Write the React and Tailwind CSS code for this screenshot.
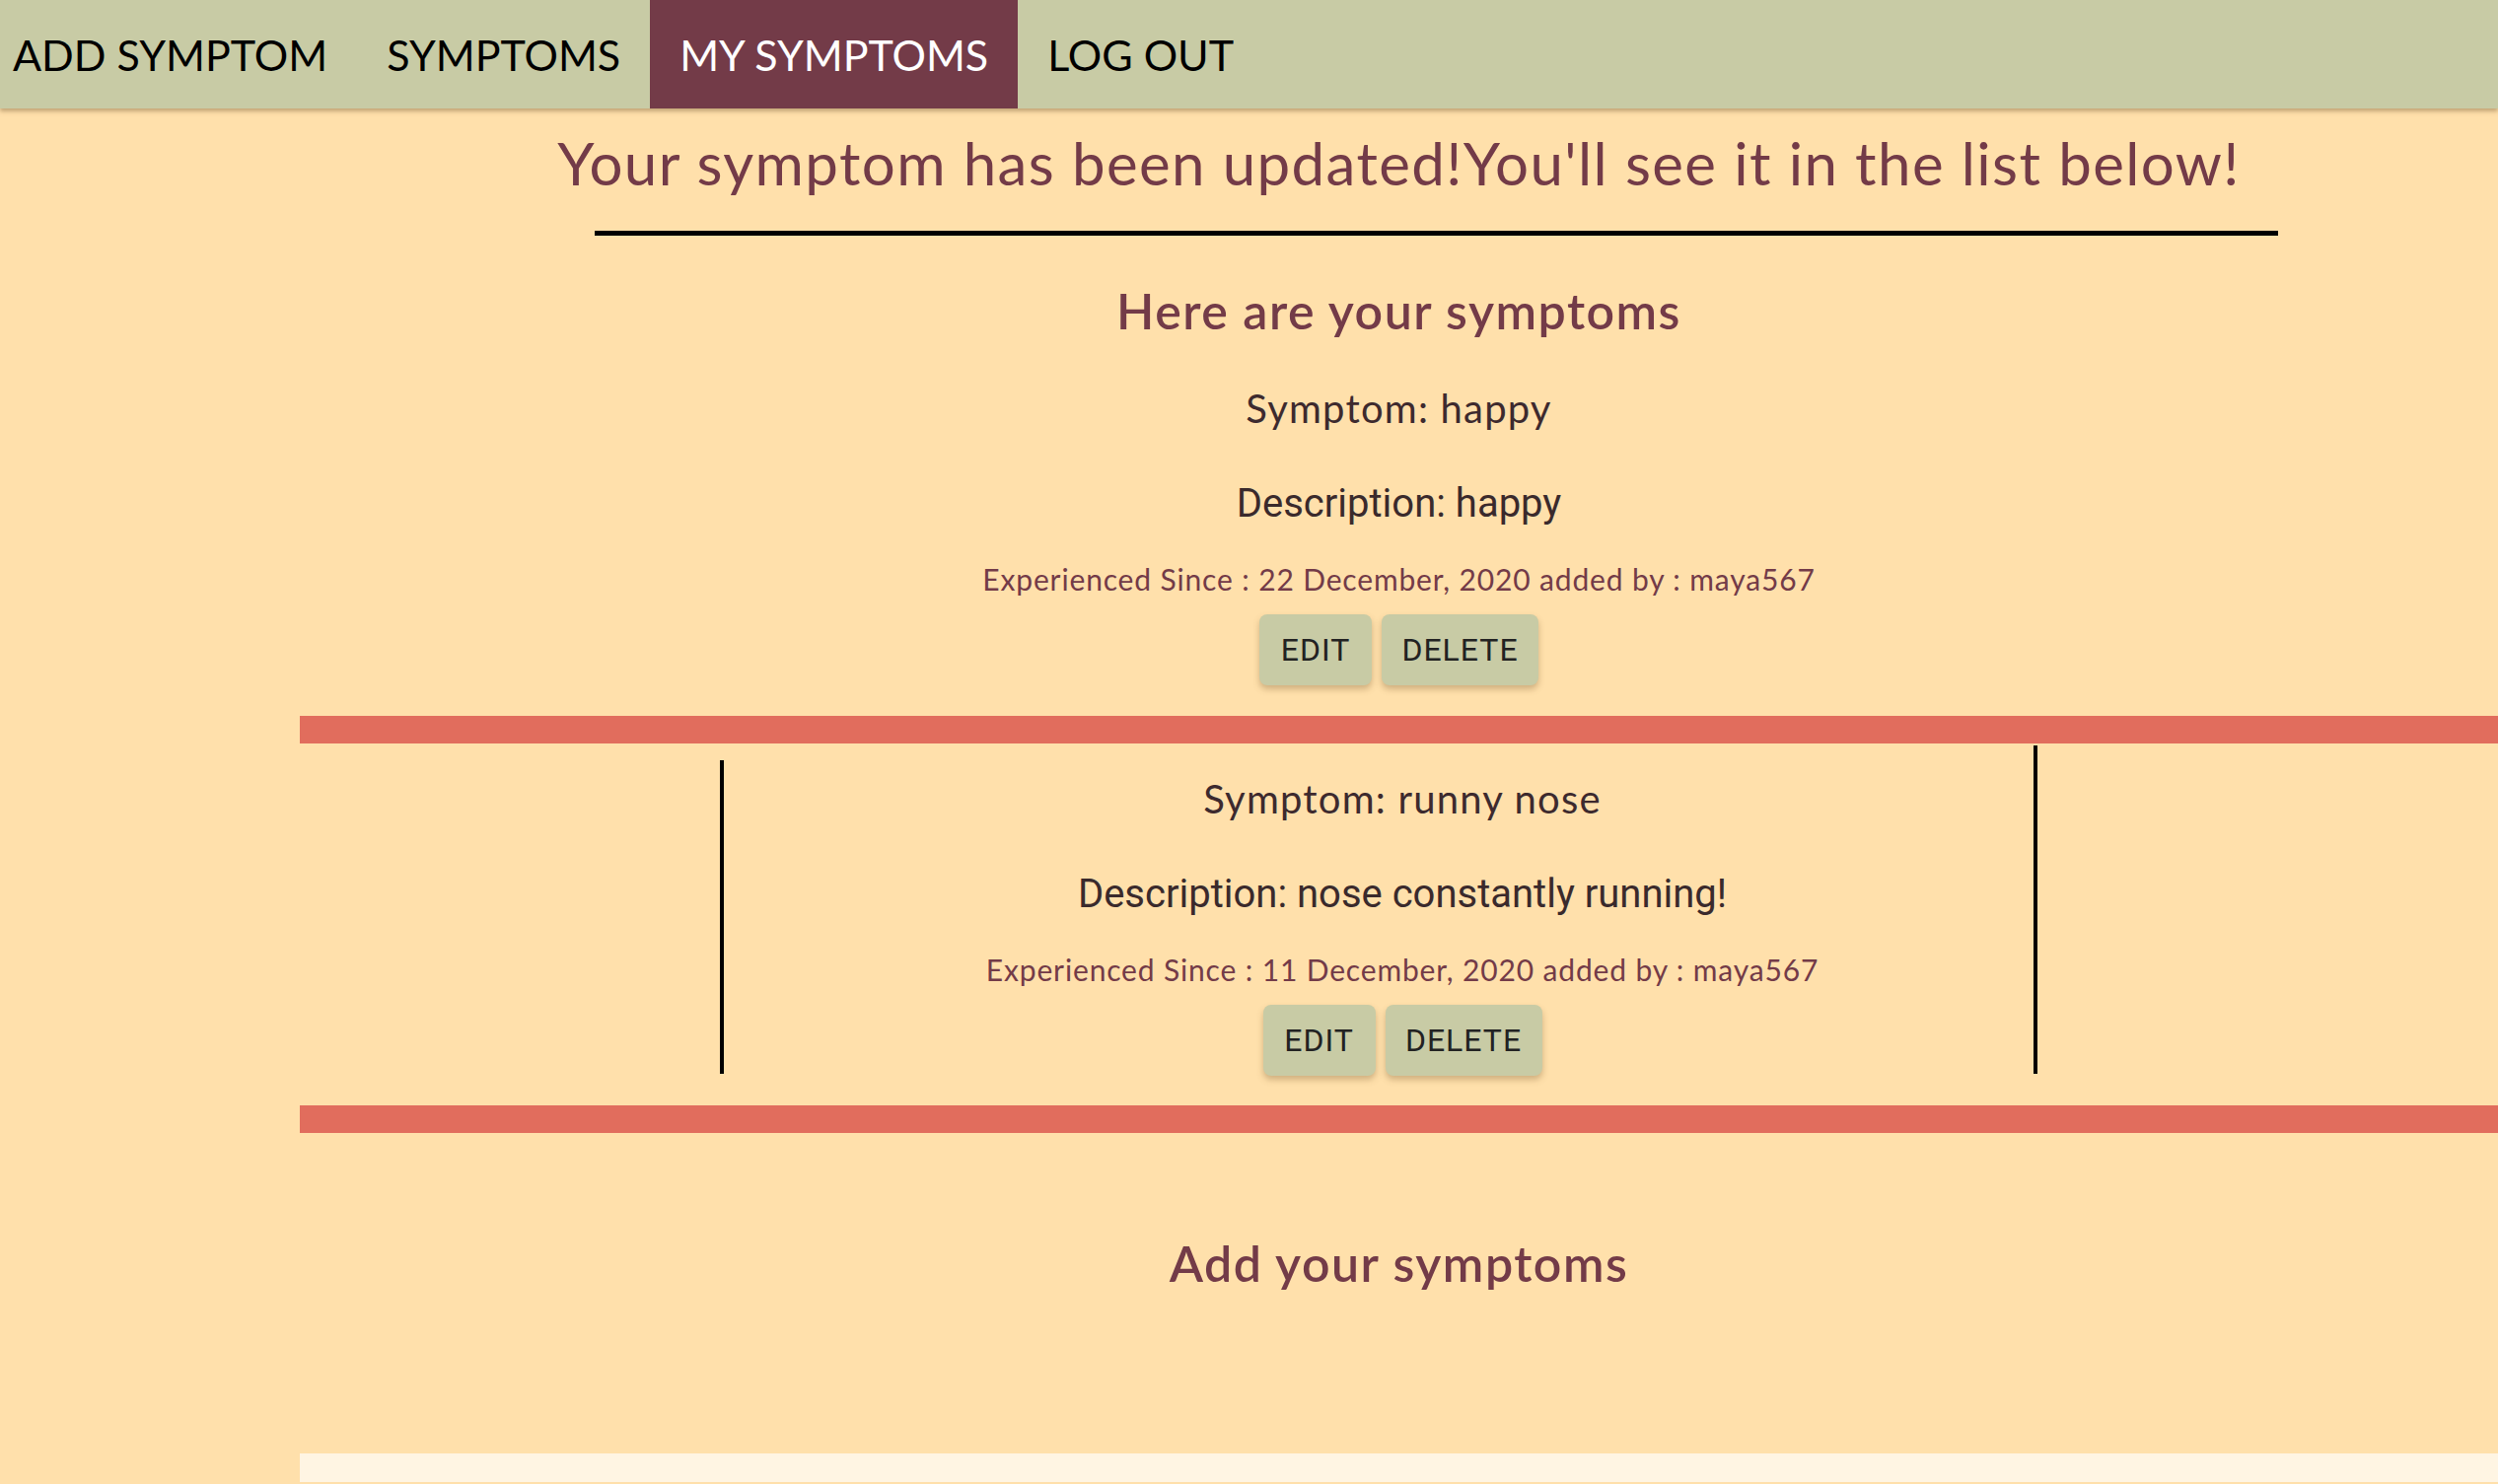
import React from "react";

const symptoms = [
  {
    name: "happy",
    description: "happy",
    since: "22 December, 2020",
    user: "maya567",
  },
  {
    name: "runny nose",
    description: "nose constantly running!",
    since: "11 December, 2020",
    user: "maya567",
  },
];

function NavItem({ label, active, first }) {
  return (
    <div
      className={
        "flex items-center text-[43px] leading-none " +
        (first ? "pl-[13px] pr-[30px] " : "px-[30px] ") +
        (active ? "bg-[#733b48] text-white" : "text-black")
      }
    >
      {label}
    </div>
  );
}

function Buttons() {
  return (
    <div className="flex justify-center gap-[10px] mt-[18px]">
      <button className="w-[114px] h-[72px] rounded-[8px] bg-[#c8cba5] text-[#222] text-[32px] font-normal tracking-[1px] font-['Roboto',sans-serif] shadow-[0_4px_6px_rgba(120,90,50,0.35)]">
        EDIT
      </button>
      <button className="w-[159px] h-[72px] rounded-[8px] bg-[#c8cba5] text-[#222] text-[32px] font-normal tracking-[1px] font-['Roboto',sans-serif] shadow-[0_4px_6px_rgba(120,90,50,0.35)]">
        DELETE
      </button>
    </div>
  );
}

function SymptomBody({ item, top }) {
  return (
    <div className="flex flex-col items-center">
      <p
        className={
          "text-[40px] leading-[46px] tracking-[1.2px] text-[#3d2a2e] " + top
        }
      >
        Symptom: {item.name}
      </p>
      <p className="mt-[51px] text-[40px] leading-[46px] text-[#3a2a2c] font-['Roboto',sans-serif]">
        Description: {item.description}
      </p>
      <p className="mt-[35px] text-[30px] leading-[36px] tracking-[0.85px] text-[#733b48]">
        Experienced Since : {item.since} added by : {item.user}
      </p>
      <Buttons />
    </div>
  );
}

export default function App() {
  return (
    <div className="h-screen bg-[#ffe0ab] overflow-hidden font-['Lato',sans-serif]">
      <nav className="h-[110px] flex bg-[#c8cba5] shadow-[0_3px_4px_rgba(140,110,70,0.5)] relative">
        <NavItem label="ADD SYMPTOM" first />
        <NavItem label="SYMPTOMS" />
        <NavItem label="MY SYMPTOMS" active />
        <NavItem label="LOG OUT" />
      </nav>

      <div className="pl-[304px]">
        <h1 className="mt-[19px] text-center text-[60px] leading-[72px] tracking-[1.4px] text-[#733b48]">
          Your symptom has been updated!You'll see it in the list below!
        </h1>
        <div className="mt-[33px] ml-[299px] w-[1707px] h-[5px] bg-black"></div>

        <h2 className="mt-[47px] text-center text-[50px] leading-[58px] tracking-[1.5px] font-semibold text-[#733b48]">
          Here are your symptoms
        </h2>

        <SymptomBody item={symptoms[0]} top="mt-[47px]" />

        <div className="mt-[31px] h-[28px] bg-[#e16d5d]"></div>

        <div className="flex">
          <div className="w-[426px] shrink-0"></div>
          <div className="w-[4px] shrink-0 mt-[17px] h-[318px] bg-black"></div>
          <div className="w-[1328px] shrink-0 pl-[48px]">
            <SymptomBody item={symptoms[1]} top="mt-[33px]" />
          </div>
          <div className="w-[4px] shrink-0 mt-[2px] h-[333px] bg-black"></div>
        </div>

        <div className="mt-[30px] h-[28px] bg-[#e16d5d]"></div>

        <h2 className="mt-[103px] text-center text-[50px] leading-[58px] tracking-[1.5px] font-semibold text-[#733b48]">
          Add your symptoms
        </h2>

        <div className="mt-[164px] h-[29px] bg-[#fff5e3]"></div>
      </div>
    </div>
  );
}
